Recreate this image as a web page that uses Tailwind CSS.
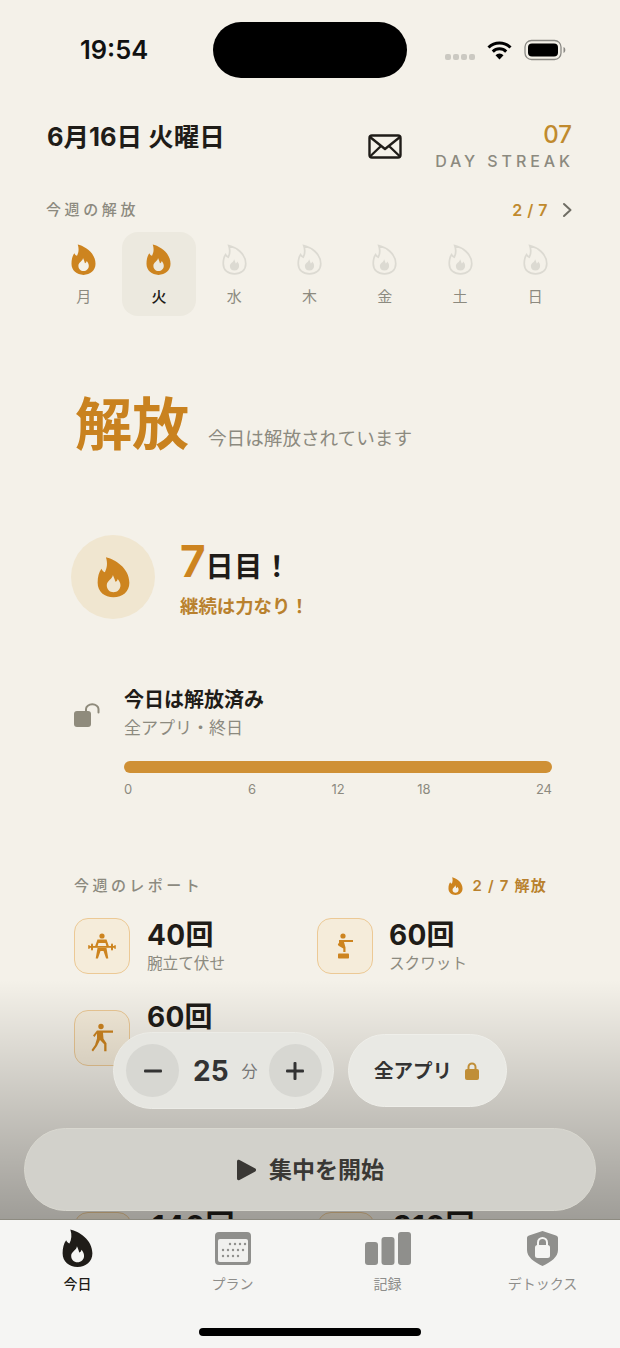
<!doctype html>
<html lang="ja">
<head>
<meta charset="utf-8">
<script src="https://cdn.jsdelivr.net/npm/@tailwindcss/browser@4"></script>
</head>
<body class="m-0">
<div class="relative w-[620px] h-[1348px] overflow-hidden bg-[#f4f1e9] text-[#1f1c18] font-['Inter','Noto_Sans_CJK_JP',sans-serif]">

  <!-- status bar -->
  <div class="flex pt-[22px] h-[78px]">
    <div class="w-[213px] pl-[80px] pt-[11px] text-[25.500px] leading-[34px] font-semibold text-[#111]">19:54</div>
    <div class="w-[194px] h-[56px] rounded-full bg-black"></div>
    <div class="flex items-start pl-[38px] pt-[18px]">
      <div class="flex gap-[2px] mt-[14px]">
        <span class="w-[6px] h-[6px] rounded-[2px] bg-[#cbc9c2]"></span><span class="w-[6px] h-[6px] rounded-[2px] bg-[#cbc9c2]"></span><span class="w-[6px] h-[6px] rounded-[2px] bg-[#cbc9c2]"></span><span class="w-[6px] h-[6px] rounded-[2px] bg-[#cbc9c2]"></span>
      </div>
      <svg class="ml-[12px]" width="25" height="20" viewBox="0 0 25 20"><path d="M1.500 7.500a15.500 15.500 0 0 1 22 0" fill="none" stroke="#000" stroke-width="3"/><path d="M5.800 11.600a9.500 9.500 0 0 1 13.400 0" fill="none" stroke="#000" stroke-width="3"/><path d="M12.500 19.500l-4-4.200a5.600 5.600 0 0 1 8 0z" fill="#000"/></svg>
      <svg class="ml-[12px] -mt-[1px]" width="42" height="22" viewBox="0 0 42 22"><rect x="1" y="1.500" width="36" height="19" rx="6.500" fill="none" stroke="#8b8a85" stroke-width="1.300"/><rect x="4" y="4.500" width="30" height="13" rx="4" fill="#000"/><path d="M39.500 8v6c1.200-.4 1.800-1.600 1.800-3s-.6-2.600-1.800-3z" fill="#8b8a85"/></svg>
    </div>
  </div>

  <!-- header -->
  <div class="flex items-start mt-[42px] pl-[47px] pr-[48px]">
    <div class="text-[25.500px] leading-[34px] font-bold">6月16日 火曜日</div>
    <svg class="ml-auto mt-[14px]" width="34" height="25" viewBox="0 0 34 25" fill="none" stroke="#1f1c18" stroke-width="2.400" stroke-linejoin="round"><rect x="1.500" y="1.500" width="31" height="22" rx="2.500"/><path d="M2 3l15 12L32 3M2 22.500l11-10.500M32 22.500l-11-10.500"/></svg>
    <div class="ml-[33px] flex flex-col items-end">
      <div class="mt-[1px] text-[24px] leading-[28px] font-medium text-[#c08a2e]">07</div>
      <div class="mt-[2px] text-[16px] leading-[20px] font-medium tracking-[0.245em] -mr-[2px] text-[#8c8a7f]">DAY STREAK</div>
    </div>
  </div>

  <!-- week -->
  <div class="flex items-center mt-[26px] h-[24px] ml-[46px] w-[527px]">
    <span class="mt-[2px] text-[15px] font-medium tracking-[0.24em] text-[#8c8a7f]">今週の解放</span>
    <span class="mt-[1px] ml-auto text-[16px] font-semibold tracking-[0.03em] text-[#c08a2e]">2 / 7</span>
    <svg class="ml-[14px] mt-[1px]" width="11" height="16" viewBox="0 0 11 16" fill="none" stroke="#6f6d64" stroke-width="2" stroke-linecap="round" stroke-linejoin="round"><path d="M2 2l6.500 6L2 14"/></svg>
  </div>
  <div class="grid grid-cols-7 mt-[11px] ml-[46px] w-[527px] text-center text-[15px] leading-[20px] text-[#8c8a7f]">
    <div class="h-[84px] flex flex-col items-center pt-[12px]">
      <svg width="25" height="31" viewBox="0 0 26 32"><path fill="#cd841f" fill-rule="evenodd" d="M7 .5C14 2 25.500 9 25.500 20.500 25.500 27.500 20 32 13 32S.5 27.500 .5 20.500C.5 16 1.500 12 3.500 9.500c.7 1.500 1.500 2.300 2.700 2.700C8 9 8.500 5 7 .5zM13 28c3 0 5.500-2.200 5.500-5.500 0-2-1-3.500-2.200-5-.3 1.500-1 2-1.800 2.300-.7-2.300-1.500-4.300-2-5.300 0 3-4.800 4.500-4.800 8 0 3.300 2.300 5.500 5.300 5.500z"/></svg>
      <span class="mt-[12px]">月</span>
    </div>
    <div class="h-[84px] mx-[1px] flex flex-col items-center pt-[12px] rounded-[16px] bg-[#ece9df] text-[#1f1c18] font-medium">
      <svg width="25" height="31" viewBox="0 0 26 32"><path fill="#cd841f" fill-rule="evenodd" d="M7 .5C14 2 25.500 9 25.500 20.500 25.500 27.500 20 32 13 32S.5 27.500 .5 20.500C.5 16 1.500 12 3.500 9.500c.7 1.500 1.500 2.300 2.700 2.700C8 9 8.500 5 7 .5zM13 28c3 0 5.500-2.200 5.500-5.500 0-2-1-3.500-2.200-5-.3 1.500-1 2-1.800 2.300-.7-2.300-1.500-4.300-2-5.300 0 3-4.800 4.500-4.800 8 0 3.300 2.300 5.500 5.300 5.500z"/></svg>
      <span class="mt-[12px]">火</span>
    </div>
    <div class="h-[84px] flex flex-col items-center pt-[12px]">
      <svg width="25" height="31" viewBox="0 0 26 32"><path fill="none" stroke="#dcdad2" stroke-width="1.800" d="M7 1.500C14 3 24.700 9.500 24.700 20.500 24.700 27 20 31 13 31S1.300 27 1.300 20.500C1.300 16.500 2.200 13 3.700 11c.7 1.300 1.500 2 2.800 2.500C8.500 9.500 8.500 5.500 7 1.500z"/><path fill="#dcdad2" d="M13 27.500c2.800 0 4.800-2 4.800-4.800 0-2-1-3.300-2-4.500-.3 1.200-.8 1.700-1.500 2-.5-2-1.300-3.500-1.800-4.500 0 3-4.300 4-4.300 7 0 3 2 4.800 4.800 4.800z"/></svg>
      <span class="mt-[12px]">水</span>
    </div>
    <div class="h-[84px] flex flex-col items-center pt-[12px]">
      <svg width="25" height="31" viewBox="0 0 26 32"><path fill="none" stroke="#dcdad2" stroke-width="1.800" d="M7 1.500C14 3 24.700 9.500 24.700 20.500 24.700 27 20 31 13 31S1.300 27 1.300 20.500C1.300 16.500 2.200 13 3.700 11c.7 1.300 1.500 2 2.800 2.500C8.500 9.500 8.500 5.500 7 1.500z"/><path fill="#dcdad2" d="M13 27.500c2.800 0 4.800-2 4.800-4.800 0-2-1-3.300-2-4.500-.3 1.200-.8 1.700-1.500 2-.5-2-1.300-3.500-1.800-4.500 0 3-4.300 4-4.300 7 0 3 2 4.800 4.800 4.800z"/></svg>
      <span class="mt-[12px]">木</span>
    </div>
    <div class="h-[84px] flex flex-col items-center pt-[12px]">
      <svg width="25" height="31" viewBox="0 0 26 32"><path fill="none" stroke="#dcdad2" stroke-width="1.800" d="M7 1.500C14 3 24.700 9.500 24.700 20.500 24.700 27 20 31 13 31S1.300 27 1.300 20.500C1.300 16.500 2.200 13 3.700 11c.7 1.300 1.500 2 2.800 2.500C8.500 9.500 8.500 5.500 7 1.500z"/><path fill="#dcdad2" d="M13 27.500c2.800 0 4.800-2 4.800-4.800 0-2-1-3.300-2-4.500-.3 1.200-.8 1.700-1.500 2-.5-2-1.300-3.500-1.800-4.500 0 3-4.300 4-4.300 7 0 3 2 4.800 4.800 4.800z"/></svg>
      <span class="mt-[12px]">金</span>
    </div>
    <div class="h-[84px] flex flex-col items-center pt-[12px]">
      <svg width="25" height="31" viewBox="0 0 26 32"><path fill="none" stroke="#dcdad2" stroke-width="1.800" d="M7 1.500C14 3 24.700 9.500 24.700 20.500 24.700 27 20 31 13 31S1.300 27 1.300 20.500C1.300 16.500 2.200 13 3.700 11c.7 1.300 1.500 2 2.800 2.500C8.500 9.500 8.500 5.500 7 1.500z"/><path fill="#dcdad2" d="M13 27.500c2.800 0 4.800-2 4.800-4.800 0-2-1-3.300-2-4.500-.3 1.200-.8 1.700-1.500 2-.5-2-1.300-3.500-1.800-4.500 0 3-4.300 4-4.300 7 0 3 2 4.800 4.800 4.800z"/></svg>
      <span class="mt-[12px]">土</span>
    </div>
    <div class="h-[84px] flex flex-col items-center pt-[12px]">
      <svg width="25" height="31" viewBox="0 0 26 32"><path fill="none" stroke="#dcdad2" stroke-width="1.800" d="M7 1.500C14 3 24.700 9.500 24.700 20.500 24.700 27 20 31 13 31S1.300 27 1.300 20.500C1.300 16.500 2.200 13 3.700 11c.7 1.300 1.500 2 2.800 2.500C8.500 9.500 8.500 5.500 7 1.500z"/><path fill="#dcdad2" d="M13 27.500c2.800 0 4.800-2 4.800-4.800 0-2-1-3.300-2-4.500-.3 1.200-.8 1.700-1.500 2-.5-2-1.300-3.500-1.800-4.500 0 3-4.300 4-4.300 7 0 3 2 4.800 4.800 4.800z"/></svg>
      <span class="mt-[12px]">日</span>
    </div>
  </div>

  <!-- hero -->
  <div class="flex mt-[74px] ml-[75px] h-[68px]">
    <span class="text-[57px] leading-[70px] font-bold text-[#c9821f]">解放</span>
    <span class="ml-[19px] mt-[35px] text-[18.600px] leading-[26px] text-[#8c8a7f]">今日は解放されています</span>
  </div>

  <!-- streak -->
  <div class="flex mt-[77px] ml-[71px]">
    <div class="w-[84px] h-[84px] rounded-full bg-[#f0e6d0] flex items-center justify-center">
      <svg width="33" height="42" viewBox="0 0 26 32"><path fill="#cd841f" fill-rule="evenodd" d="M7 .5C14 2 25.500 9 25.500 20.500 25.500 27.500 20 32 13 32S.5 27.500 .5 20.500C.5 16 1.500 12 3.500 9.500c.7 1.500 1.500 2.300 2.700 2.700C8 9 8.500 5 7 .5zM13 28c3 0 5.500-2.200 5.500-5.500 0-2-1-3.500-2.200-5-.3 1.500-1 2-1.800 2.300-.7-2.300-1.500-4.300-2-5.300 0 3-4.800 4.500-4.800 8 0 3.300 2.300 5.500 5.300 5.500z"/></svg>
    </div>
    <div class="ml-[25px] pt-[1px]">
      <div class="flex items-baseline h-[50px] leading-[50px]">
        <span class="text-[44px] font-bold text-[#cd841f]">7</span>
        <span class="text-[28px] font-semibold tracking-[0.02em]">日目！</span>
      </div>
      <div class="mt-[7px] text-[18.400px] leading-[26px] font-semibold text-[#b9812e]">継続は力なり！</div>
    </div>
  </div>

  <!-- today -->
  <div class="flex mt-[67px] ml-[74px]">
    <svg class="mt-[17px]" width="26" height="25" viewBox="0 0 26 25" fill="none"><rect x="0" y="8" width="17" height="16" rx="3" fill="#8f8b7c"/><path d="M12 8V6a6 4.500 0 0 1 12.500 0v3.500" stroke="#8f8b7c" stroke-width="2" stroke-linecap="round"/></svg>
    <div class="ml-[24px]">
      <div class="text-[20px] leading-[28px] font-semibold">今日は解放済み</div>
      <div class="mt-[2px] text-[17px] leading-[24px] text-[#8c8a7f]">全アプリ・終日</div>
    </div>
  </div>
  <div class="mt-[21px] ml-[124px] w-[428px] h-[12px] rounded-full bg-[#cf9035]"></div>
  <div class="mt-[7px] ml-[124px] w-[428px] flex text-[13px] leading-[18px] text-[#8c8a7f]">
    <span class="w-[8px] text-center">0</span>
    <span class="ml-[108px] w-[24px] text-center">6</span>
    <span class="ml-[62px] w-[24px] text-center">12</span>
    <span class="ml-[62px] w-[24px] text-center">18</span>
    <span class="ml-auto w-[20px] text-right">24</span>
  </div>

  <!-- report -->
  <div class="flex items-center mt-[76px] ml-[74px] w-[473px] h-[24px]">
    <span class="text-[15px] font-medium tracking-[0.23em] text-[#8c8a7f]">今週のレポート</span>
    <svg class="ml-auto" width="15" height="18" viewBox="0 0 26 32"><path fill="#cd841f" fill-rule="evenodd" d="M7 .5C14 2 25.500 9 25.500 20.500 25.500 27.500 20 32 13 32S.5 27.500 .5 20.500C.5 16 1.500 12 3.500 9.500c.7 1.500 1.500 2.300 2.700 2.700C8 9 8.500 5 7 .5zM13 28c3 0 5.500-2.200 5.500-5.500 0-2-1-3.500-2.200-5-.3 1.500-1 2-1.800 2.300-.7-2.300-1.500-4.300-2-5.300 0 3-4.800 4.500-4.800 8 0 3.300 2.300 5.500 5.300 5.500z"/></svg>
    <span class="ml-[9px] text-[15px] font-semibold tracking-[0.08em] text-[#b9812e]">2 / 7 解放</span>
  </div>

  <div class="grid grid-cols-[243px_243px] mt-[20px] ml-[74px]">
    <div class="flex gap-[17px] h-[56px]">
      <div class="w-[56px] h-[56px] rounded-[14px] border border-[#ecc995] bg-[#f5ecda] flex items-center justify-center">
        <svg width="28" height="28" viewBox="0 0 28 28" fill="#cd841f"><circle cx="14" cy="4" r="2.600"/><path d="M9.500 7.500h9l2.500 7h-2.500l-1-3.500h-7l-1 3.500H7z"/><rect x="1" y="14" width="26" height="1.800"/><rect x="3" y="11.500" width="2" height="7" rx="1"/><rect x="23" y="11.500" width="2" height="7" rx="1"/><rect x=".2" y="13" width="1.500" height="4" rx=".7"/><rect x="26.300" y="13" width="1.500" height="4" rx=".7"/><path d="M9.500 16h9l1.800 10.500h-2.200L15.500 19h-3l-2.600 7.500H7.700z"/></svg>
      </div>
      <div class="pt-[1px]">
        <div class="text-[28px] leading-[32px] font-bold tracking-[0.01em]">40回</div>
        <div class="mt-[2px] text-[15.600px] leading-[22px] text-[#8c8a7f]">腕立て伏せ</div>
      </div>
    </div>
    <div class="flex gap-[16px] h-[56px]">
      <div class="w-[56px] h-[56px] rounded-[14px] border border-[#ecc995] bg-[#f5ecda] flex items-center justify-center">
        <svg width="26" height="28" viewBox="0 0 26 28" fill="#cd841f"><circle cx="11" cy="4" r="2.600"/><path d="M7 8h14v2H12l1.500 5.500V20h-2.200v-3.500L7 14c-1.500-1-1.500-2 0-3z"/><rect x="6" y="21.500" width="11" height="5" rx=".8"/></svg>
      </div>
      <div class="pt-[1px]">
        <div class="text-[28px] leading-[32px] font-bold tracking-[0.01em]">60回</div>
        <div class="mt-[2px] text-[15.600px] leading-[22px] text-[#8c8a7f]">スクワット</div>
      </div>
    </div>
  </div>

  <div class="flex gap-[17px] mt-[36px] ml-[74px] h-[56px]">
    <div class="w-[56px] h-[56px] rounded-[14px] border border-[#ecc995] bg-[#f5ecda] flex items-center justify-center">
      <svg width="26" height="30" viewBox="0 0 26 30" fill="#cd841f"><circle cx="12" cy="3.500" r="2.700"/><path d="M8 7.500h16v2.200H14l.5 6 3 4.500v8h-2.300v-7L11 17l-3 6-4 5.500-1.500-1.500 3.500-5 2-6.500V10.500L5.500 14 4 12.500z"/></svg>
    </div>
    <div class="-mt-[9px]">
      <div class="text-[28px] leading-[32px] font-bold tracking-[0.01em]">60回</div>
      <div class="mt-[3px] text-[15.600px] leading-[22px] text-[#8c8a7f]">シャドー</div>
    </div>
  </div>

  <div class="grid grid-cols-[243px_243px] mt-[146px] ml-[74px]">
    <div class="flex gap-[20px]">
      <div class="w-[58px] h-[56px] rounded-[14px] border border-[#ecc995] bg-[#f5ecda]"></div>
      <div class="-mt-[2px] text-[29px] leading-[32px] font-bold tracking-[0.02em]">140回</div>
    </div>
    <div class="flex gap-[18px]">
      <div class="w-[58px] h-[56px] rounded-[14px] border border-[#ecc995] bg-[#f5ecda]"></div>
      <div class="-mt-[2px] text-[29px] leading-[32px] font-bold tracking-[0.02em]">310回</div>
    </div>
  </div>

  <!-- fade over the scrolling content -->
  <div class="absolute left-0 right-0 top-[980px] h-[240px] bg-linear-to-b from-transparent to-black/35"></div>

  <!-- duration pill -->
  <div class="absolute left-[113px] top-[1032px] w-[221px] h-[77px] rounded-full bg-[#e6e6e1] border border-[#ecece7] flex items-center pl-[12px]">
    <div class="w-[53px] h-[53px] rounded-full bg-[#d7d7d2] flex items-center justify-center">
      <svg width="20" height="4" viewBox="0 0 20 4"><rect x="1" y=".5" width="18" height="3" rx="1" fill="#333"/></svg>
    </div>
    <span class="ml-[14px] text-[28px] leading-[34px] font-bold text-[#333]">25</span>
    <span class="ml-[13px] text-[16px] leading-[24px] text-[#777]">分</span>
    <div class="ml-[11px] w-[53px] h-[53px] rounded-full bg-[#d7d7d2] flex items-center justify-center">
      <svg width="20" height="20" viewBox="0 0 20 20" fill="#333"><rect x="1" y="8.500" width="18" height="3" rx="1"/><rect x="8.500" y="1" width="3" height="18" rx="1"/></svg>
    </div>
  </div>

  <!-- app scope pill -->
  <div class="absolute left-[348px] top-[1034px] w-[159px] h-[73px] rounded-full bg-[#e9e9e4] border border-[#efefea] flex items-center pl-[25px]">
    <span class="text-[19.500px] leading-[28px] font-semibold text-[#333]">全アプリ</span>
    <svg class="ml-[13px]" width="14" height="18" viewBox="0 0 14 18" fill="none"><path d="M3.500 8V5a3.500 3.500 0 0 1 7 0v3" stroke="#c08e37" stroke-width="2"/><rect y="7" width="14" height="11" rx="2" fill="#c08e37"/></svg>
  </div>

  <!-- start button -->
  <div class="absolute left-[24px] top-[1128px] w-[572px] h-[83px] rounded-full bg-[#d2d1cb] border border-[#d9d8d0] flex items-center justify-center">
    <svg width="21" height="22" viewBox="0 0 21 22"><path d="M1 2.500C1 1 2.300.4 3.500 1.100l15.800 8.500c1 .6 1 2.200 0 2.800L3.500 20.900C2.300 21.600 1 21 1 19.500z" fill="#3a3835"/></svg>
    <span class="ml-[12px] text-[23px] leading-[32px] font-semibold text-[#3a3835]">集中を開始</span>
  </div>

  <!-- tab bar -->
  <div class="absolute left-0 right-0 bottom-0 h-[129px] bg-[#f5f5f3] border-t border-[#8d8b81] grid grid-cols-4 text-center text-[14px] leading-[20px] text-[#8e8e8b]">
    <div class="flex flex-col items-center">
      <svg class="mt-[8px]" width="31" height="40" viewBox="0 0 26 32"><path fill="#1f1c18" fill-rule="evenodd" d="M7 .5C14 2 25.500 9 25.500 20.500 25.500 27.500 20 32 13 32S.5 27.500 .5 20.500C.5 16 1.500 12 3.500 9.500c.7 1.500 1.500 2.300 2.700 2.700C8 9 8.500 5 7 .5zM13 28c3 0 5.500-2.200 5.500-5.500 0-2-1-3.500-2.200-5-.3 1.500-1 2-1.800 2.300-.7-2.300-1.500-4.300-2-5.300 0 3-4.800 4.500-4.800 8 0 3.300 2.300 5.500 5.300 5.500z"/></svg>
      <span class="mt-[6px] text-[#1f1c18] font-medium">今日</span>
    </div>
    <div class="flex flex-col items-center">
      <svg class="mt-[12px] mb-[9px]" width="36" height="33" viewBox="0 0 36 33"><rect width="36" height="33" rx="4" fill="#8f8f8c"/><rect x="3" y="7" width="30" height="23" rx="2" fill="#f0f0ee"/><g fill="#8f8f8c"><circle cx="15" cy="12" r="1.200"/><circle cx="20" cy="12" r="1.200"/><circle cx="25" cy="12" r="1.200"/><circle cx="30" cy="12" r="1.200"/><circle cx="8" cy="18" r="1.200"/><circle cx="13" cy="18" r="1.200"/><circle cx="18" cy="18" r="1.200"/><circle cx="23" cy="18" r="1.200"/><circle cx="28" cy="18" r="1.200"/><circle cx="8" cy="24" r="1.200"/><circle cx="13" cy="24" r="1.200"/><circle cx="18" cy="24" r="1.200"/><circle cx="23" cy="24" r="1.200"/></g></svg>
      <span>プラン</span>
    </div>
    <div class="flex flex-col items-center">
      <svg class="mt-[12px] mb-[9px]" width="46" height="33" viewBox="0 0 46 33" fill="#8f8f8c"><rect y="10" width="13" height="23" rx="3"/><rect x="16.500" y="5" width="13" height="28" rx="3"/><rect x="33" width="13" height="33" rx="3"/></svg>
      <span>記録</span>
    </div>
    <div class="flex flex-col items-center">
      <svg class="mt-[11px] mb-[8px]" width="31" height="35" viewBox="0 0 31 35"><path d="M15.500 0L29 4.500c1.300.4 2 1.300 2 2.700V19c0 7-7 12-15.500 16C7 31 0 26 0 19V7.200c0-1.400.7-2.300 2-2.700z" fill="#8f8f8c"/><rect x="8" y="14" width="15" height="13" rx="2.500" fill="#f5f5f3"/><path d="M11 15v-3.500a4.500 4.500 0 0 1 9 0V15" fill="none" stroke="#f5f5f3" stroke-width="2"/></svg>
      <span>デトックス</span>
    </div>
  </div>
  <div class="absolute left-[199px] top-[1328px] w-[222px] h-[8px] rounded-full bg-black"></div>
</div>
</body>
</html>
